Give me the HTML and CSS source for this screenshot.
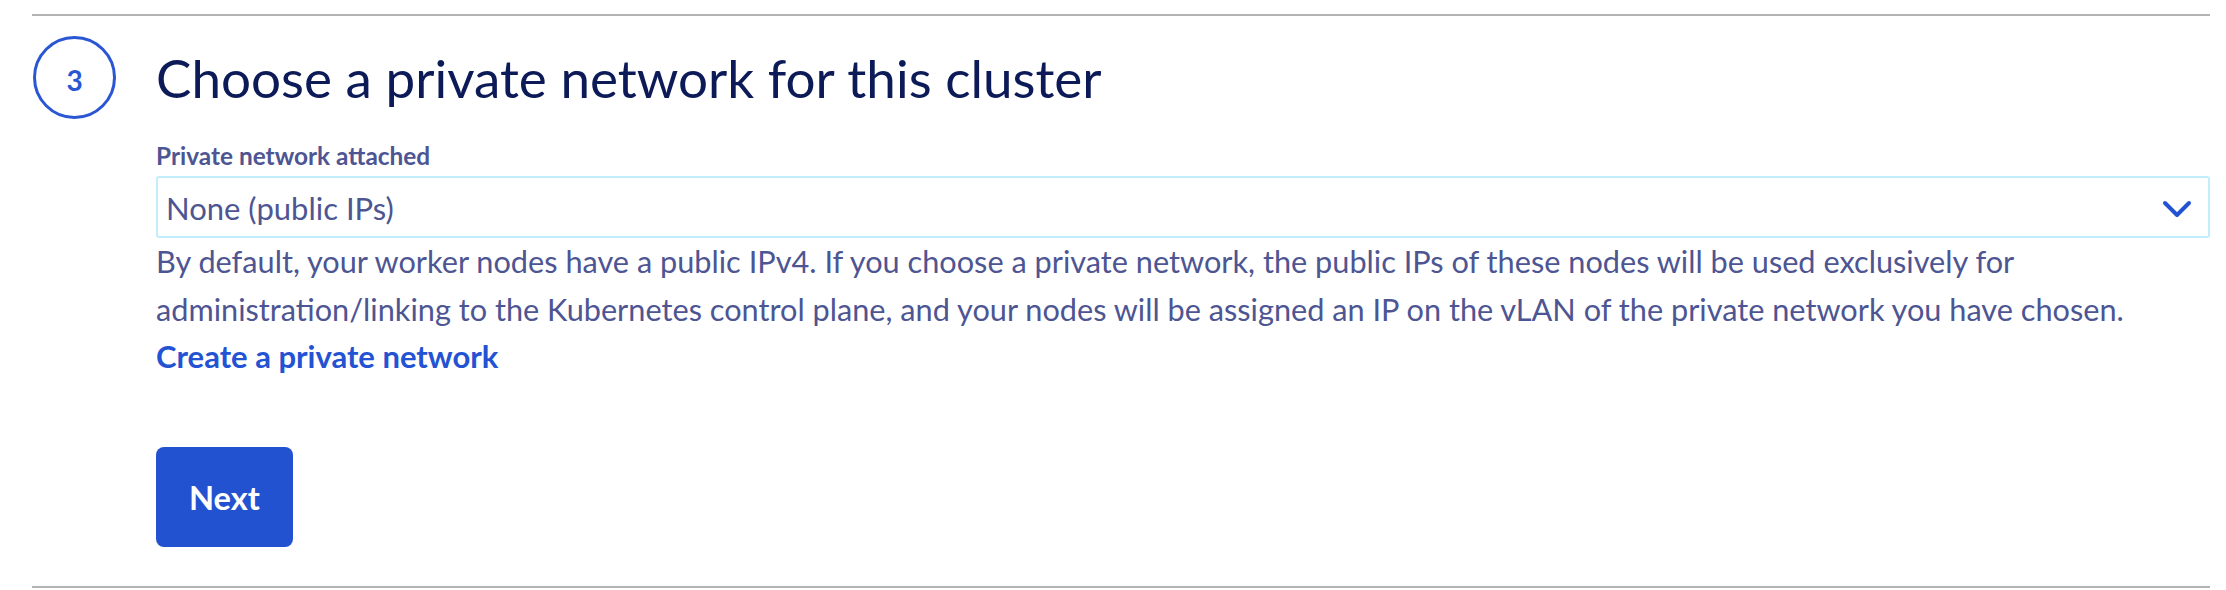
FILE: index.html
```html
<!DOCTYPE html>
<html lang="en">
<head>
<meta charset="utf-8">
<title>Choose a private network for this cluster</title>
<link rel="stylesheet" href="styles.css">
</head>
<body>
<main class="page">
  <section class="step">
    <div class="step-head">
      <div class="step-badge"><span>3</span></div>
      <h2 class="step-title">Choose a private network for this cluster</h2>
    </div>
    <div class="step-body">
      <label class="field-label" for="network">Private network attached</label>
      <div class="select">
        <span class="select-value" id="network">None (public IPs)</span>
        <svg class="select-chevron" width="30" height="20" viewBox="0 0 30 20" aria-hidden="true">
          <polyline points="3,4 15,16 27,4" fill="none" stroke="#2352d3" stroke-width="4" stroke-linecap="round" stroke-linejoin="round"/>
        </svg>
      </div>
      <p class="help">By default, your worker nodes have a public IPv4. If you choose a private network, the public IPs of these nodes will be used exclusively for administration/linking to the Kubernetes control plane, and your nodes will be assigned an IP on the vLAN of the private network you have chosen.</p>
      <a class="link" href="#">Create a private network</a>
      <div class="actions">
        <button class="btn-primary" type="button">Next</button>
      </div>
    </div>
  </section>
</main>
</body>
</html>
```
FILE: styles.css
```css
* { box-sizing: border-box; }

html, body {
  margin: 0;
  background: #ffffff;
}

body {
  font-family: "Lato", "Roboto", sans-serif;
  color: #4d5592;
}

.page {
  padding: 14px 16px 0 32px;
}

.step {
  border-top: 2px solid #b3b3b3;
  border-bottom: 2px solid #b3b3b3;
  padding-top: 20px;
  padding-bottom: 39px;
}

.step-head {
  display: flex;
  align-items: center;
  height: 83px;
}

.step-badge {
  width: 83px;
  height: 83px;
  margin-left: 1px;
  border: 3px solid #2a56d4;
  border-radius: 50%;
  display: flex;
  align-items: center;
  justify-content: center;
  flex: none;
}

.step-badge span {
  font-size: 28px;
  font-weight: 700;
  color: #2a56d4;
  line-height: 1;
  margin-top: 4px;
}

.step-title {
  margin: 0 0 0 40px;
  font-size: 53px;
  font-weight: 400;
  line-height: 1.2;
  color: #0c1a57;
}

.step-body {
  margin-left: 124px;
  padding-top: 22px;
  display: flex;
  flex-direction: column;
  align-items: flex-start;
}

.field-label {
  display: block;
  font-size: 24.4px;
  font-weight: 700;
  line-height: 1.2;
  color: #4d5592;
  margin-bottom: 6px;
}

.select {
  align-self: stretch;
  height: 62px;
  border: 2px solid #c2eefb;
  border-radius: 3px;
  display: flex;
  align-items: center;
  justify-content: space-between;
  padding: 0 16px 0 8px;
}

.select-value {
  font-size: 31px;
  line-height: 1.2;
  color: #4d5592;
  margin-top: 2px;
}

.select-chevron {
  display: block;
  margin-top: 3px;
}

.help {
  margin: 0;
  font-size: 30.7px;
  line-height: 48px;
  color: #4d5592;
}

.link {
  display: block;
  font-size: 31px;
  font-weight: 700;
  line-height: 44px;
  color: #2352d3;
  text-decoration: none;
}

.actions {
  margin-top: 69px;
}

.btn-primary {
  display: inline-flex;
  align-items: center;
  justify-content: center;
  height: 100px;
  padding: 0 33px;
  border: 0;
  border-radius: 8px;
  background: #2352d1;
  color: #ffffff;
  font-family: "Lato", "Roboto", sans-serif;
  font-size: 32.6px;
  font-weight: 700;
  cursor: pointer;
}
```
